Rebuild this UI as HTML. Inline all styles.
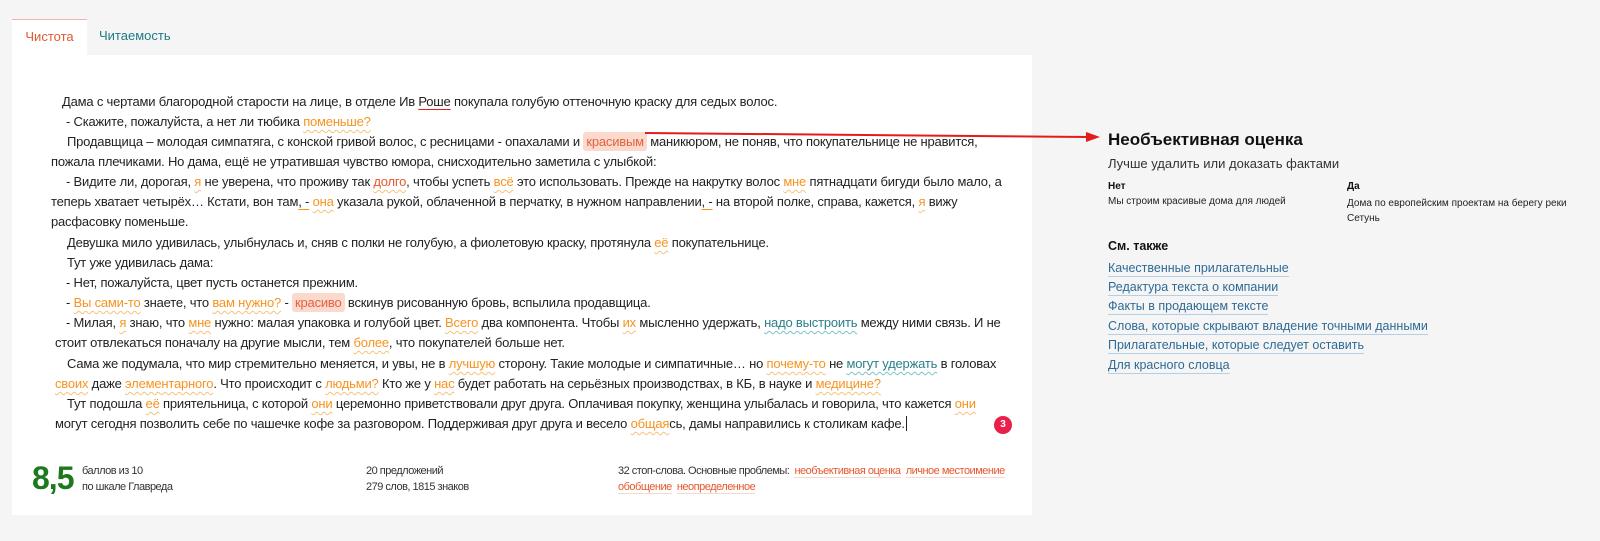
<!DOCTYPE html>
<html><head><meta charset="utf-8"><style>
*{margin:0;padding:0;box-sizing:border-box}
body{width:1600px;height:541px;background:#f5f5f5;font-family:"Liberation Sans",Arial,sans-serif;position:relative;overflow:hidden;color:#222}
.tab1{position:absolute;left:12px;top:19px;width:75px;height:36px;background:#fff;border-top:1px solid #f2b3a8;color:#e4582e;font-size:13px;line-height:34px;text-align:center}
.tab2{position:absolute;left:99px;top:19px;height:36px;color:#1f7a86;font-size:13px;line-height:34px}
.panel{position:absolute;left:12px;top:55px;width:1020px;height:460px;background:#fff}
.l{position:absolute;font-size:13px;letter-spacing:-0.2px;line-height:20px;white-space:nowrap;color:#222}
.o{color:#f7931e;text-decoration:underline wavy #f7c27a;text-decoration-thickness:1px;text-underline-offset:3px}
.u{text-decoration:underline;text-decoration-color:#f7931e;text-underline-offset:3px}
.r{color:#e3623f;background:#fbd9cd;border-radius:3px;padding:2px 3px}
.t{color:#2a7f8a;text-decoration:underline wavy #7ac4c8;text-decoration-thickness:1px;text-underline-offset:3px}
.red{text-decoration:underline;text-decoration-color:#e02020;text-underline-offset:3px}
.small{position:absolute;font-size:11px;line-height:16px;letter-spacing:-0.5px;color:#333;white-space:nowrap}
.ft{color:#e4582e;border-bottom:1px solid #f7d8cc}
.side{position:absolute;left:1108px;color:#111;white-space:nowrap}
.lk{position:absolute;left:1108px;font-size:12.5px;color:#2d6b96;border-bottom:1px solid #b5d0e4;line-height:15px;white-space:nowrap}
</style></head><body>
<div class="tab1">Чистота</div>
<div class="tab2">Читаемость</div>
<div class="panel"></div>

<div class="l" style="left:62px;top:92px">Дама с чертами благородной старости на лице, в отделе Ив <span class="red">Роше</span> покупала голубую оттеночную краску для седых волос.</div>
<div class="l" style="left:66px;top:112px">- Скажите, пожалуйста, а нет ли тюбика <span class="o">поменьше?</span></div>
<div class="l" style="left:67px;top:132px">Продавщица – молодая симпатяга, с конской гривой волос, с ресницами - опахалами и <span class="r">красивым</span> маникюром, не поняв, что покупательнице не нравится,</div>
<div class="l" style="left:51px;top:152px">пожала плечиками. Но дама, ещё не утратившая чувство юмора, снисходительно заметила с улыбкой:</div>
<div class="l" style="left:66px;top:172px">- Видите ли, дорогая, <span class="o">я</span> не уверена, что проживу так <span class="o" style="color:#e4582e">долго</span>, чтобы успеть <span class="o">всё</span> это использовать. Прежде на накрутку волос <span class="o">мне</span> пятнадцати бигуди было мало, а</div>
<div class="l" style="left:51px;top:192px">теперь хватает четырёх… Кстати, вон там<span class="u">, -</span> <span class="o">она</span> указала рукой, облаченной в перчатку, в нужном направлении<span class="u">, -</span> на второй полке, справа, кажется, <span class="o">я</span> вижу</div>
<div class="l" style="left:51px;top:212px">расфасовку поменьше.</div>
<div class="l" style="left:67px;top:233px">Девушка мило удивилась, улыбнулась и, сняв с полки не голубую, а фиолетовую краску, протянула <span class="o">её</span> покупательнице.</div>
<div class="l" style="left:67px;top:253px">Тут уже удивилась дама:</div>
<div class="l" style="left:66px;top:273px">- Нет, пожалуйста, цвет пусть останется прежним.</div>
<div class="l" style="left:66px;top:293px">- <span class="o">Вы сами-то</span> знаете, что <span class="o">вам нужно?</span> - <span class="r">красиво</span> вскинув рисованную бровь, вспылила продавщица.</div>
<div class="l" style="left:66px;top:313px">- Милая, <span class="o">я</span> знаю, что <span class="o">мне</span> нужно: малая упаковка и голубой цвет. <span class="o">Всего</span> два компонента. Чтобы <span class="o">их</span> мысленно удержать, <span class="t">надо выстроить</span> между ними связь. И не</div>
<div class="l" style="left:55px;top:333px">стоит отвлекаться поначалу на другие мысли, тем <span class="o">более</span>, что покупателей больше нет.</div>
<div class="l" style="left:67px;top:354px">Сама же подумала, что мир стремительно меняется, и увы, не в <span class="o">лучшую</span> сторону. Такие молодые и симпатичные… но <span class="o">почему-то</span> не <span class="t">могут удержать</span> в головах</div>
<div class="l" style="left:55px;top:374px"><span class="o">своих</span> даже <span class="o">элементарного</span>. Что происходит с <span class="o">людьми?</span> Кто же у <span class="o">нас</span> будет работать на серьёзных производствах, в КБ, в науке и <span class="o">медицине?</span></div>
<div class="l" style="left:67px;top:394px">Тут подошла <span class="o">её</span> приятельница, с которой <span class="o">они</span> церемонно приветствовали друг друга. Оплачивая покупку, женщина улыбалась и говорила, что кажется <span class="o">они</span></div>
<div class="l" style="left:55px;top:414px">могут сегодня позволить себе по чашечке кофе за разговором. Поддерживая друг друга и весело <span class="o">общая</span>сь, дамы направились к столикам кафе.<span style="border-left:1px solid #222;margin-left:1px"></span></div>

<div style="position:absolute;left:994px;top:416px;width:18px;height:18px;border-radius:50%;background:#e8204a;color:#fff;font-size:10px;font-weight:bold;text-align:center;line-height:18px">3</div>

<svg style="position:absolute;left:0;top:0" width="1600" height="541"><line x1="645" y1="133" x2="1088" y2="137" stroke="#e41b1b" stroke-width="2"/><polygon points="1100,137 1086,132 1086,142" fill="#e41b1b"/></svg>

<div style="position:absolute;left:32px;top:458px;font-size:32px;font-weight:bold;color:#1c7a1c;letter-spacing:-1px;line-height:40px">8,5</div>
<div class="small" style="left:82px;top:463px">баллов из 10<br>по шкале Главреда</div>
<div class="small" style="left:366px;top:463px">20 предложений<br>279 слов, 1815 знаков</div>
<div class="small" style="left:618px;top:463px">32 стоп-слова. Основные проблемы: &nbsp;<span class="ft">необъективная оценка</span>&nbsp; <span class="ft">личное местоимение</span><br><span class="ft">обобщение</span>&nbsp; <span class="ft">неопределенное</span></div>

<div class="side" style="top:130px;font-size:17px;font-weight:bold">Необъективная оценка</div>
<div class="side" style="top:156px;font-size:13px;color:#333">Лучше удалить или доказать фактами</div>
<div class="side" style="top:181px;font-size:10px;font-weight:bold">Нет</div>
<div class="side" style="top:196px;font-size:10px;color:#222">Мы строим красивые дома для людей</div>
<div class="side" style="left:1347px;top:181px;font-size:10px;font-weight:bold">Да</div>
<div class="side" style="left:1347px;top:196px;font-size:10px;line-height:15px;color:#222">Дома по европейским проектам на берегу реки<br>Сетунь</div>
<div class="side" style="top:239px;font-size:12.5px;font-weight:bold">См. также</div>
<div class="lk" style="top:261px">Качественные прилагательные</div>
<div class="lk" style="top:280px">Редактура текста о компании</div>
<div class="lk" style="top:299px">Факты в продающем тексте</div>
<div class="lk" style="top:319px">Слова, которые скрывают владение точными данными</div>
<div class="lk" style="top:338px">Прилагательные, которые следует оставить</div>
<div class="lk" style="top:358px">Для красного словца</div>
</body></html>
